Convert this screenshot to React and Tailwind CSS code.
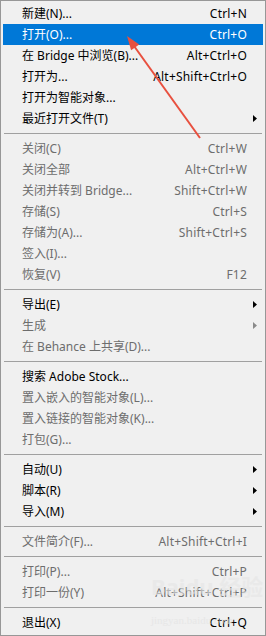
const groups = [
  [
    { label: '新建(N)...', keys: 'Ctrl+N' },
    { label: '打开(O)...', keys: 'Ctrl+O', active: true },
    { label: '在 Bridge 中浏览(B)...', keys: 'Alt+Ctrl+O' },
    { label: '打开为...', keys: 'Alt+Shift+Ctrl+O' },
    { label: '打开为智能对象...' },
    { label: '最近打开文件(T)', sub: true },
  ],
  [
    { label: '关闭(C)', keys: 'Ctrl+W', off: true },
    { label: '关闭全部', keys: 'Alt+Ctrl+W', off: true },
    { label: '关闭并转到 Bridge...', keys: 'Shift+Ctrl+W', off: true },
    { label: '存储(S)', keys: 'Ctrl+S', off: true },
    { label: '存储为(A)...', keys: 'Shift+Ctrl+S', off: true },
    { label: '签入(I)...', off: true },
    { label: '恢复(V)', keys: 'F12', off: true },
  ],
  [
    { label: '导出(E)', sub: true },
    { label: '生成', sub: true, off: true },
    { label: '在 Behance 上共享(D)...', off: true },
  ],
  [
    { label: '搜索 Adobe Stock...' },
    { label: '置入嵌入的智能对象(L)...', off: true },
    { label: '置入链接的智能对象(K)...', off: true },
    { label: '打包(G)...', off: true },
  ],
  [
    { label: '自动(U)', sub: true },
    { label: '脚本(R)', sub: true },
    { label: '导入(M)', sub: true },
  ],
  [{ label: '文件简介(F)...', keys: 'Alt+Shift+Ctrl+I', off: true }],
  [
    { label: '打印(P)...', keys: 'Ctrl+P', off: true },
    { label: '打印一份(Y)', keys: 'Alt+Shift+Ctrl+P', off: true },
  ],
  [{ label: '退出(X)', keys: 'Ctrl+Q' }],
]

function SubArrow({ off, active }) {
  const fill = active ? '#ffffff' : off ? '#8a8a8a' : '#000000'
  return (
    <svg width="4" height="7" viewBox="0 0 4 7" className="shrink-0">
      <path d="M0 0 L4 3.5 L0 7 Z" fill={fill} />
    </svg>
  )
}

function Row({ item }) {
  const color = item.active ? 'text-white' : item.off ? 'text-[#6d6d6d]' : 'text-black'
  return (
    <div
      className={`flex h-[21px] items-center pl-[19px] pr-[6px] ${color} ${item.active ? 'bg-[#0078d7]' : ''}`}
    >
      <span className="flex-1 whitespace-nowrap">{item.label}</span>
      {item.keys && <span className="whitespace-nowrap tracking-[0.2px]">{item.keys}</span>}
      <span className="flex w-[10px] justify-end">
        {item.sub && <SubArrow off={item.off} active={item.active} />}
      </span>
    </div>
  )
}

export default function App() {
  return (
    <div
      className="relative h-[636px] w-[266px] overflow-hidden border border-[#979797] bg-[#f0f0f0] px-[2px] pt-[2px] text-[12px] leading-none"
      style={{ fontFamily: '"Segoe UI", "Noto Sans", "Noto Sans CJK SC", sans-serif' }}
    >
      {groups.map((group, gi) => (
        <div key={gi}>
          {gi > 0 && (
            <div className="py-[4px] px-[1px]">
              <div className="h-px bg-[#a0a0a0]" />
            </div>
          )}
          {group.map((item) => (
            <Row key={item.label} item={item} />
          ))}
        </div>
      ))}

      {/* watermark */}
      <div className="pointer-events-none absolute left-[150px] top-[574px] text-[22px] font-bold text-[#e6e6e6] opacity-60">
        Baidu 经验
      </div>
      <div className="pointer-events-none absolute left-[150px] top-[614px] text-[11px] text-[#e4e4e4] opacity-70" style={{ fontFamily: '"Liberation Serif", serif' }}>
        jingyan.baidu.com
      </div>

      {/* red annotation arrow */}
      <svg className="pointer-events-none absolute left-0 top-0" width="266" height="636">
        <line x1="133" y1="45" x2="199" y2="137" stroke="#e8503f" strokeWidth="2" />
        <path d="M126 35 L138.2 43.5 L130.1 49.3 Z" fill="#e8503f" />
      </svg>
    </div>
  )
}
